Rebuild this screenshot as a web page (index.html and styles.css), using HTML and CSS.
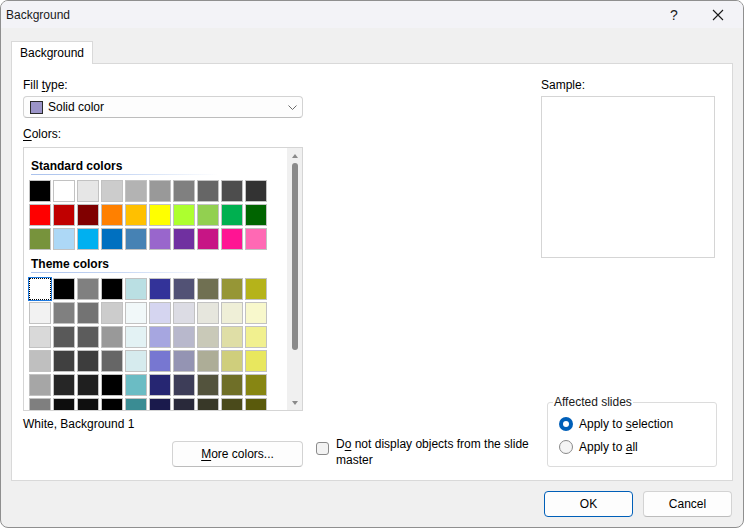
FILE: index.html
```html
<!DOCTYPE html>
<html>
<head>
<meta charset="utf-8">
<link rel="stylesheet" href="styles.css">
</head>
<body>
<div class="window">
  <div class="titlebar">
    <span class="title">Background</span>
    <span class="help">?</span>
    <span class="close"><svg width="12" height="12" viewBox="0 0 12 12"><path d="M1 1L11 11M11 1L1 11" stroke="#1a1a1a" stroke-width="1.1" fill="none"/></svg></span>
  </div>
  <div class="body">
    <div class="tabs"><div class="tab">Background</div></div>
    <div class="panel">
      <div class="left">
        <div class="label">Fill <u>t</u>ype:</div>
        <div class="dropdown">
          <span class="fill-swatch"></span>
          <span class="dd-text">Solid color</span>
          <svg class="chev" width="9" height="5" viewBox="0 0 9 5"><path d="M0.5 0.5L4.5 4.5L8.5 0.5" stroke="#6b6b6b" stroke-width="1" fill="none"/></svg>
        </div>
        <div class="label gap8"><u>C</u>olors:</div>
        <div class="listbox">
          <div class="list-content">
            <div class="section-head">Standard colors</div>
            <div class="grid">
              <span class="sw" style="background:#000000"></span><span class="sw" style="background:#ffffff"></span><span class="sw" style="background:#e6e6e6"></span><span class="sw" style="background:#cccccc"></span><span class="sw" style="background:#b3b3b3"></span><span class="sw" style="background:#999999"></span><span class="sw" style="background:#808080"></span><span class="sw" style="background:#666666"></span><span class="sw" style="background:#4d4d4d"></span><span class="sw" style="background:#333333"></span>
              <span class="sw" style="background:#ff0000"></span><span class="sw" style="background:#c00000"></span><span class="sw" style="background:#800000"></span><span class="sw" style="background:#ff8000"></span><span class="sw" style="background:#ffc000"></span><span class="sw" style="background:#ffff00"></span><span class="sw" style="background:#adff2f"></span><span class="sw" style="background:#92d050"></span><span class="sw" style="background:#00b050"></span><span class="sw" style="background:#006400"></span>
              <span class="sw" style="background:#77933c"></span><span class="sw" style="background:#add8f6"></span><span class="sw" style="background:#00b0f0"></span><span class="sw" style="background:#0070c0"></span><span class="sw" style="background:#4682b4"></span><span class="sw" style="background:#9966cc"></span><span class="sw" style="background:#7030a0"></span><span class="sw" style="background:#c71585"></span><span class="sw" style="background:#ff1493"></span><span class="sw" style="background:#ff69b4"></span>
            </div>
            <div class="section-head">Theme colors</div>
            <div class="grid">
              <span class="sw selected" style="background:#ffffff"></span><span class="sw" style="background:#000000"></span><span class="sw" style="background:#808080"></span><span class="sw" style="background:#000000"></span><span class="sw" style="background:#badfe3"></span><span class="sw" style="background:#333399"></span><span class="sw" style="background:#525275"></span><span class="sw" style="background:#707052"></span><span class="sw" style="background:#969636"></span><span class="sw" style="background:#b5b31a"></span>
              <span class="sw" style="background:#f2f2f2"></span><span class="sw" style="background:#808080"></span><span class="sw" style="background:#737373"></span><span class="sw" style="background:#cccccc"></span><span class="sw" style="background:#f1f8f9"></span><span class="sw" style="background:#d5d5f0"></span><span class="sw" style="background:#dcdce4"></span><span class="sw" style="background:#e6e6dd"></span><span class="sw" style="background:#efefd7"></span><span class="sw" style="background:#f8f8cc"></span>
              <span class="sw" style="background:#d9d9d9"></span><span class="sw" style="background:#595959"></span><span class="sw" style="background:#5c5c5c"></span><span class="sw" style="background:#999999"></span><span class="sw" style="background:#e3f2f4"></span><span class="sw" style="background:#a6a6e0"></span><span class="sw" style="background:#b8b8cc"></span><span class="sw" style="background:#c9c9b8"></span><span class="sw" style="background:#dfdea6"></span><span class="sw" style="background:#f1f08f"></span>
              <span class="sw" style="background:#bfbfbf"></span><span class="sw" style="background:#404040"></span><span class="sw" style="background:#3d3d3d"></span><span class="sw" style="background:#666666"></span><span class="sw" style="background:#d6ebee"></span><span class="sw" style="background:#7777d1"></span><span class="sw" style="background:#9494b3"></span><span class="sw" style="background:#adad97"></span><span class="sw" style="background:#cfce7c"></span><span class="sw" style="background:#e8e75e"></span>
              <span class="sw" style="background:#a6a6a6"></span><span class="sw" style="background:#262626"></span><span class="sw" style="background:#1f1f1f"></span><span class="sw" style="background:#000000"></span><span class="sw" style="background:#6bbcc4"></span><span class="sw" style="background:#262672"></span><span class="sw" style="background:#3d3d58"></span><span class="sw" style="background:#53533d"></span><span class="sw" style="background:#6f6f28"></span><span class="sw" style="background:#878613"></span>
              <span class="sw" style="background:#7f7f7f"></span><span class="sw" style="background:#0d0d0d"></span><span class="sw" style="background:#0f0f0f"></span><span class="sw" style="background:#000000"></span><span class="sw" style="background:#3a8c93"></span><span class="sw" style="background:#1a1a4c"></span><span class="sw" style="background:#29293a"></span><span class="sw" style="background:#383828"></span><span class="sw" style="background:#4a4a1b"></span><span class="sw" style="background:#5a5a0c"></span>
            </div>
          </div>
          <div class="scrollbar">
            <div class="arrow-area"><span class="tri-up"></span></div>
            <div class="thumb"></div>
            <div class="track-fill"></div>
            <div class="arrow-area"><span class="tri-down"></span></div>
          </div>
        </div>
        <div class="label gap5">White, Background 1</div>
      </div>
      <div class="right">
        <div class="label">Sample:</div>
        <div class="sample"></div>
      </div>
      <div class="btn-cell"><button class="btn more"><u>M</u>ore colors...</button></div>
      <div class="check">
        <span class="checkbox"></span>
        <span class="check-text">D<u>o</u> not display objects from the slide master</span>
      </div>
      <fieldset class="affected">
        <legend>Affected slides</legend>
        <div class="radio-row"><span class="radio on"></span><span>Apply to <u>s</u>election</span></div>
        <div class="radio-row"><span class="radio"></span><span>Apply to <u>a</u>ll</span></div>
      </fieldset>
    </div>
  </div>
  <div class="footer">
    <button class="btn ok">OK</button>
    <button class="btn cancel">Cancel</button>
  </div>
</div>
</body>
</html>
```
FILE: styles.css
```css
* { box-sizing: border-box; }
html, body {
  margin: 0;
  padding: 0;
  width: 744px;
  height: 528px;
  overflow: hidden;
  background: #ffffff;
}
body {
  font-family: "Liberation Sans", Arial, sans-serif;
  font-size: 12px;
  color: #000;
}
u { text-decoration: underline; text-underline-offset: 2px; }
.window {
  width: 744px;
  height: 528px;
  border: 1px solid #8f8f8f;
  border-radius: 8px;
  background: #f0f0f0;
  overflow: hidden;
  display: flex;
  flex-direction: column;
}
.titlebar {
  height: 27px;
  flex: none;
  background: #f3f3f7;
  display: flex;
  align-items: center;
  padding-left: 5px;
}
.title { flex: 1; font-size: 12px; color: #1a1a1a; }
.help {
  width: 20px;
  text-align: center;
  font-size: 14px;
  color: #1a1a1a;
  margin-right: 28px;
}
.close {
  width: 14px;
  display: flex;
  align-items: center;
  margin-right: 17px;
}
.body {
  padding: 13px 10px 0 10px;
  flex: none;
}
.tabs { display: flex; }
.tab {
  position: relative;
  z-index: 1;
  width: 82px;
  height: 23px;
  margin-bottom: -1px;
  background: #fff;
  border: 1px solid #d9d9d9;
  border-bottom: none;
  display: flex;
  align-items: center;
  justify-content: center;
  padding-bottom: 1px;
}
.panel {
  width: 722px;
  height: 418px;
  background: #fff;
  border: 1px solid #d9d9d9;
  padding: 13px 15px 12px 11px;
  display: grid;
  grid-template-columns: 280px 238px 176px;
  grid-template-rows: 355px 32px;
  row-gap: 4px;
}
.left { grid-column: 1; grid-row: 1; display: flex; flex-direction: column; }
.label { height: 16px; line-height: 16px; white-space: nowrap; }
.gap8 { margin-top: 8px; }
.gap5 { margin-top: 5px; }
.dropdown {
  margin-top: 3px;
  height: 22px;
  border: 1px solid #d3d3d3;
  border-bottom-color: #bdbdbd;
  border-radius: 4px;
  background: #fdfdfd;
  display: flex;
  align-items: center;
  padding-left: 6px;
  padding-right: 5px;
}
.fill-swatch {
  width: 13px;
  height: 13px;
  background: #9b94c8;
  border: 1px solid #2a2a2a;
  margin-right: 5px;
  flex: none;
}
.dd-text { flex: 1; }
.chev { flex: none; }
.listbox {
  margin-top: 5px;
  height: 264px;
  border: 1px solid #d5d5d5;
  display: flex;
  overflow: hidden;
}
.list-content {
  flex: 1;
  padding: 10px 0 0 5px;
  overflow: hidden;
}
.section-head {
  font-weight: bold;
  height: 17px;
  line-height: 16px;
  margin-left: 2px;
  width: 186px;
  border-bottom: 1px solid transparent;
  border-image: linear-gradient(to right, #a9c1ec, #c8d8f4 50%, rgba(255,255,255,0)) 1;
}
.grid {
  margin-top: 5px;
  margin-bottom: 6px;
  display: grid;
  grid-template-columns: repeat(10, 22px);
  grid-auto-rows: 22px;
  gap: 2px;
}
.sw {
  display: block;
  width: 22px;
  height: 22px;
  border: 1px solid #c2c2c2;
}
.sw.selected {
  border: 1px dotted #000;
  outline: 1px solid #1f7ae0;
}
.scrollbar {
  width: 15px;
  flex: none;
  background: #f0f0f0;
  display: flex;
  flex-direction: column;
  align-items: center;
}
.arrow-area {
  height: 15px;
  flex: none;
  display: flex;
  align-items: center;
  justify-content: center;
  width: 100%;
}
.tri-up {
  width: 0; height: 0;
  border-left: 3.5px solid transparent;
  border-right: 3.5px solid transparent;
  border-bottom: 4px solid #8a8a8a;
}
.tri-down {
  width: 0; height: 0;
  border-left: 3.5px solid transparent;
  border-right: 3.5px solid transparent;
  border-top: 4px solid #8a8a8a;
}
.thumb {
  width: 6px;
  height: 187px;
  flex: none;
  background: #8a8a8a;
  border-radius: 3px;
  margin-left: 1px;
}
.track-fill { flex: 1; }
.right { grid-column: 3; grid-row: 1; display: flex; flex-direction: column; }
.sample {
  margin-top: 3px;
  width: 174px;
  height: 162px;
  border: 1px solid #d5d5d5;
}
.btn-cell {
  grid-column: 1;
  grid-row: 2;
  display: flex;
  justify-content: flex-end;
  align-items: flex-start;
  padding-top: 5px;
}
.btn {
  font-family: "Liberation Sans", Arial, sans-serif;
  font-size: 12px;
  color: #000;
  height: 26px;
  background: #fdfdfd;
  border: 1px solid #d3d3d3;
  border-bottom-color: #bcbcbc;
  border-radius: 4px;
  padding: 0;
}
.more { width: 131px; }
.check {
  grid-column: 2;
  grid-row: 2;
  display: flex;
  align-items: flex-start;
  padding-left: 13px;
}
.checkbox {
  width: 13px;
  height: 13px;
  flex: none;
  border: 1px solid #8b8b8b;
  border-radius: 3px;
  background: #f3f3f3;
  margin-top: 6px;
  margin-right: 7px;
}
.check-text { line-height: 16px; width: 200px; }
.affected {
  grid-column: 3;
  grid-row: 1 / span 2;
  align-self: end;
  margin: 0 0 1px 6px;
  width: 170px;
  border: 1px solid #dcdcdc;
  border-radius: 3px;
  padding: 3px 0 8px 11px;
  min-width: 0;
}
.affected legend {
  padding: 0 1px;
  margin-left: -6px;
  line-height: 16px;
  color: #1a1a1a;
}
.radio-row {
  height: 22px;
  display: flex;
  align-items: center;
}
.radio-row + .radio-row { margin-top: 1px; }
.radio {
  width: 14px;
  height: 14px;
  flex: none;
  border-radius: 50%;
  border: 1px solid #8a8a8a;
  background: #f5f5f5;
  margin-right: 6px;
  display: flex;
  align-items: center;
  justify-content: center;
}
.radio.on {
  border: none;
  background: #005fb8;
}
.radio.on::after {
  content: "";
  width: 6px;
  height: 6px;
  border-radius: 50%;
  background: #fff;
}
.footer {
  flex: 1;
  display: flex;
  justify-content: flex-end;
  align-items: flex-start;
  padding: 10px 11px 0 0;
  gap: 10px;
}
.ok, .cancel { width: 89px; }
.ok { border: 1px solid #005fb8; }
```
